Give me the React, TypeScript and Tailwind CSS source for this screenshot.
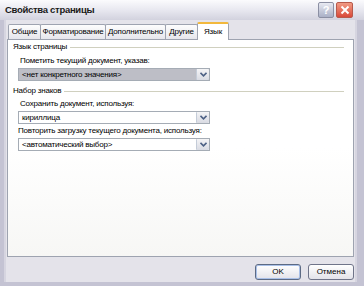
import React from "react";

const font = { fontFamily: '"Liberation Sans", Arial, sans-serif' };

function Arrow() {
  return (
    <div className="w-[13px] h-full border-l border-[#c4ccd8] bg-gradient-to-b from-[#f4f4f6] to-[#d9dbe3] flex items-center justify-center rounded-[1px]">
      <svg width="7" height="5" viewBox="0 0 7 5">
        <path d="M0.5 0.8 L3.5 3.8 L6.5 0.8" fill="none" stroke="#4d6185" strokeWidth="1.6" />
      </svg>
    </div>
  );
}

function Select({ text, gray }: { text: string; gray?: boolean }) {
  return (
    <div className={`w-[192px] h-[13px] border border-[#a5acb5] flex items-stretch ${gray ? "bg-[#bdbec6]" : "bg-white"}`}>
      <div className="flex-1 flex items-center pl-[3px] text-[8px] tracking-[-0.2px] text-black leading-none">{text}</div>
      <Arrow />
    </div>
  );
}

function Group({ title }: { title: string }) {
  return (
    <div className="h-[10px] flex items-center gap-[3px] pl-[5px] pr-[9px]">
      <span className="text-[8px] tracking-[-0.2px] leading-none text-black whitespace-nowrap">{title}</span>
      <div className="flex-1 h-[1px] bg-[#d0d0bf]" />
    </div>
  );
}

function Label({ text, pl }: { text: string; pl: string }) {
  return (
    <div className={`h-[10px] flex items-center text-[8px] tracking-[-0.2px] leading-none text-black whitespace-nowrap ${pl}`}>{text}</div>
  );
}

export default function App() {
  const tabs: [string, string][] = [
    ["Общие", "w-[33px]"],
    ["Форматирование", "w-[66px]"],
    ["Дополнительно", "w-[61px]"],
    ["Другие", "w-[33px]"],
  ];
  return (
    <div className="w-[364px] h-[286px] bg-[#c4c3d3] flex flex-col overflow-hidden" style={font}>
      {/* title bar */}
      <div className="h-[20px] flex items-center bg-gradient-to-b from-[#fbfbfd] via-[#e8e8f0] to-[#d2d2de] px-[5px] shrink-0">
        <span className="text-[9.5px] font-bold text-[#1a1a1a] tracking-[-0.3px] flex-1">Свойства страницы</span>
        <div className="flex gap-[2px] mr-[6px]">
          <div className="w-[16px] h-[16px] rounded-[2px] border border-[#8b8fa3] bg-gradient-to-b from-[#e8eaf2] to-[#aab0c6] flex items-center justify-center text-white text-[11px] font-bold leading-none">?</div>
          <div className="w-[17px] h-[16px] rounded-[2px] border border-[#b75a4c] bg-gradient-to-b from-[#f09a84] to-[#d9483a] flex items-center justify-center">
            <svg width="10" height="10" viewBox="0 0 10 10">
              <path d="M1.5 1.5 L8.5 8.5 M8.5 1.5 L1.5 8.5" stroke="#fff" strokeWidth="2" />
            </svg>
          </div>
        </div>
      </div>
      {/* body */}
      <div className="flex-1 ml-[4px] mr-[7px] mb-[4px] bg-[#e4e3ea] border-l-2 border-r-2 border-[#d6d5e0] flex flex-col">
        {/* tabs */}
        <div className="flex items-end pl-[2px] pt-[3px] h-[19px]">
          {tabs.map(([t, w], i) => (
            <div
              key={t}
              className={`${w} h-[15px] border border-b-0 border-[#9ea3b0] bg-gradient-to-b from-[#fdfdfd] to-[#e6e6ec] text-[8px] tracking-[-0.2px] text-black flex items-center justify-center rounded-t-[2px] ${i > 0 ? "-ml-px" : ""}`}
            >
              {t}
            </div>
          ))}
          <div className="w-[32px] h-[18px] -ml-px border border-b-0 border-[#9ea3b0] border-t-[2px] border-t-[#f2b83c] bg-white text-[8px] tracking-[-0.2px] text-black flex items-center justify-center rounded-t-[2px] relative top-px z-10">
            Язык
          </div>
        </div>
        {/* panel */}
        <div className="mx-[1px] h-[218px] border border-[#9ea3b0] bg-gradient-to-b from-white via-white to-[#f7f7f5] flex flex-col pt-[2px]">
          <Group title="Язык страницы" />
          <div className="mt-[4px]"><Label text="Пометить текущий документ, указав:" pl="pl-[12px]" /></div>
          <div className="pl-[10px] mt-[2px]"><Select text="<нет конкретного значения>" gray /></div>
          <div className="mt-[5px]"><Group title="Набор знаков" /></div>
          <div className="mt-[3px]"><Label text="Сохранить документ, используя:" pl="pl-[12px]" /></div>
          <div className="pl-[10px] mt-[2px]"><Select text="кириллица" /></div>
          <div className="mt-[2px]"><Label text="Повторить загрузку текущего документа, используя:" pl="pl-[10px]" /></div>
          <div className="pl-[10px] mt-[2px]"><Select text="<автоматический выбор>" /></div>
        </div>
        {/* buttons */}
        <div className="flex justify-end gap-[7px] pr-[1px] mt-[7px]">
          <div className="w-[46px] h-[16px] rounded-[3px] border border-[#5c6a84] bg-gradient-to-b from-white to-[#e3e3ea] shadow-[inset_0_0_0_1px_#a9c0e8] flex items-center justify-center text-[8px] text-black">OK</div>
          <div className="w-[46px] h-[16px] rounded-[3px] border border-[#6f7489] bg-gradient-to-b from-white to-[#e3e3ea] flex items-center justify-center text-[8px] text-black">Отмена</div>
        </div>
      </div>
    </div>
  );
}
